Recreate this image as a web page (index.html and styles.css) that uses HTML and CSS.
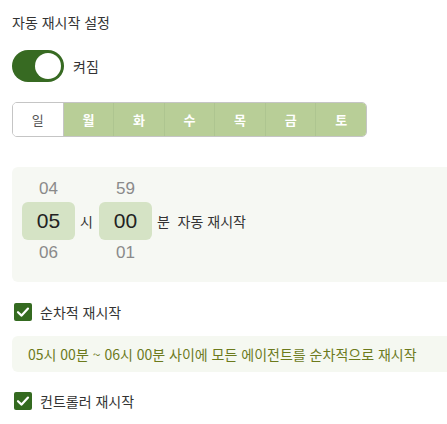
FILE: index.html
```html
<!DOCTYPE html>
<html lang="ko">
<head>
<meta charset="utf-8">
<link rel="stylesheet" href="styles.css">
</head>
<body>
<div class="page">
  <div class="title">자동 재시작 설정</div>
  <div class="toggle-row">
    <div class="toggle"><div class="knob"></div></div>
    <span class="toggle-label">켜짐</span>
  </div>
  <div class="days">
    <div class="day off">일</div>
    <div class="day">월</div>
    <div class="day">화</div>
    <div class="day">수</div>
    <div class="day">목</div>
    <div class="day">금</div>
    <div class="day">토</div>
  </div>
  <div class="panel">
    <div class="picker">
      <div class="col">
        <div class="num">04</div>
        <div class="sel">05</div>
        <div class="num">06</div>
      </div>
      <span class="unit">시</span>
      <div class="col">
        <div class="num">59</div>
        <div class="sel">00</div>
        <div class="num">01</div>
      </div>
      <span class="unit">분&nbsp; 자동 재시작</span>
    </div>
  </div>
  <div class="check-row">
    <span class="check"><svg viewBox="0 0 18 18" width="18" height="18"><path d="M4 9.2 L7.6 12.6 L14 5.6" fill="none" stroke="#fff" stroke-width="2.2" stroke-linecap="round" stroke-linejoin="round"/></svg></span>
    <span class="check-label">순차적 재시작</span>
  </div>
  <div class="info">05시 00분 ~ 06시 00분 사이에 모든 에이전트를 순차적으로 재시작</div>
  <div class="check-row second">
    <span class="check"><svg viewBox="0 0 18 18" width="18" height="18"><path d="M4 9.2 L7.6 12.6 L14 5.6" fill="none" stroke="#fff" stroke-width="2.2" stroke-linecap="round" stroke-linejoin="round"/></svg></span>
    <span class="check-label">컨트롤러 재시작</span>
  </div>
</div>
</body>
</html>
```
FILE: styles.css
```css
html, body {
  margin: 0;
  padding: 0;
  background: #fff;
  overflow: hidden;
}
body {
  font-family: "Noto Sans CJK KR", "Noto Sans", sans-serif;
  color: #333;
}
.page {
  padding: 12px 0 0 12px;
  width: 447px;
  box-sizing: border-box;
}
.title {
  font-size: 14px;
  line-height: 20px;
  color: #333;
}
.toggle-row {
  display: flex;
  align-items: center;
  margin-top: 18px;
  height: 32px;
}
.toggle {
  width: 52px;
  height: 32px;
  border-radius: 16px;
  background: #376a22;
  display: flex;
  align-items: center;
  justify-content: flex-end;
  padding-right: 3px;
  box-sizing: border-box;
}
.knob {
  width: 26px;
  height: 26px;
  border-radius: 50%;
  background: #fff;
}
.toggle-label {
  margin-left: 9px;
  font-size: 14px;
  color: #333;
}
.days {
  display: flex;
  width: 355px;
  height: 35px;
  margin-top: 20px;
  border-radius: 5px;
  overflow: hidden;
  box-sizing: border-box;
  border: 1px solid #c5c5c5;
}
.day {
  flex: 1;
  display: flex;
  align-items: center;
  justify-content: center;
  background: #b8ce97;
  color: #fff;
  font-size: 13px;
  font-weight: bold;
  border-left: 1px solid #aec590;
}
.day.off {
  background: #fff;
  color: #555;
  font-weight: normal;
  border-left: none;
}
.day:nth-child(2) {
  border-left: 1px solid #c5c5c5;
}
.panel {
  margin-top: 30px;
  height: 115px;
  background: #f6f8f3;
  border-radius: 6px 0 0 6px;
  padding: 9px 0 0 10px;
  box-sizing: border-box;
}
.picker {
  display: flex;
  align-items: center;
}
.col {
  display: flex;
  flex-direction: column;
  align-items: center;
  width: 53px;
}
.num {
  font-family: "Liberation Sans", Arial, sans-serif;
  font-size: 17px;
  line-height: 26px;
  height: 26px;
  color: #8a8a8a;
}
.sel {
  font-family: "Liberation Sans", Arial, sans-serif;
  width: 53px;
  height: 38px;
  border-radius: 6px;
  background: #d5e3c5;
  color: #222;
  font-size: 21px;
  display: flex;
  align-items: center;
  justify-content: center;
}
.unit {
  font-size: 14px;
  color: #333;
  margin: 0 6px 0 5px;
}
.check-row {
  display: flex;
  align-items: center;
  margin-top: 21px;
  padding-left: 2px;
  height: 18px;
}
.check-row.second {
  margin-top: 20px;
}
.check {
  width: 18px;
  height: 18px;
  border-radius: 2px;
  background: #346a20;
  display: flex;
}
.check-label {
  margin-left: 8px;
  font-size: 14px;
  color: #333;
}
.info {
  margin-top: 15px;
  height: 36px;
  background: #f5f8f1;
  border-radius: 6px 0 0 6px;
  display: flex;
  align-items: center;
  padding-left: 16px;
  font-size: 14px;
  color: #6c7a1c;
  white-space: nowrap;
}
```
